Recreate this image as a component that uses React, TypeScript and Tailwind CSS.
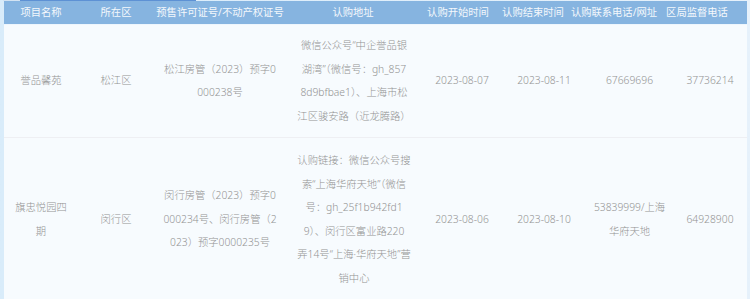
import React from "react";

type Row = {
  name: string[];
  district: string[];
  license: string[];
  address: string[];
  start: string;
  end: string;
  contact: string[];
  phone: string;
};

const rows: Row[] = [
  {
    name: ["誉品馨苑"],
    district: ["松江区"],
    license: ["松江房管（2023）预字0", "000238号"],
    address: [
      "微信公众号“中企誉品银",
      "湖湾”（微信号：gh_857",
      "8d9bfbae1）、上海市松",
      "江区骏安路（近龙腾路）",
    ],
    start: "2023-08-07",
    end: "2023-08-11",
    contact: ["67669696"],
    phone: "37736214",
  },
  {
    name: ["旗忠悦园四", "期"],
    district: ["闵行区"],
    license: ["闵行房管（2023）预字0", "000234号、闵行房管（2", "023）预字0000235号"],
    address: [
      "认购链接：微信公众号搜",
      "索“上海华府天地”（微信",
      "号：gh_25f1b942fd1",
      "9）、闵行区富业路220",
      "弄14号“上海·华府天地”营",
      "销中心",
    ],
    start: "2023-08-06",
    end: "2023-08-10",
    contact: ["53839999/上海", "华府天地"],
    phone: "64928900",
  },
];

const headers = [
  { label: "项目名称", w: "w-[74px]" },
  { label: "所在区", w: "w-[76px]" },
  { label: "预售许可证号/不动产权证号", w: "w-[132px]" },
  { label: "认购地址", w: "w-[134px]" },
  { label: "认购开始时间", w: "w-[76px]" },
  { label: "认购结束时间", w: "w-[74px]" },
  { label: "认购联系电话/网址", w: "w-[88px]" },
  { label: "区局监督电话", w: "w-[78px]" },
];

function Cell({ lines, w }: { lines: string[]; w: string }) {
  return (
    <div className={`${w} flex shrink-0 flex-col items-center justify-center text-center`}>
      {lines.map((l) => (
        <div key={l} className="whitespace-nowrap">
          {l}
        </div>
      ))}
    </div>
  );
}

export default function App() {
  return (
    <div
      className="h-[299px] w-[750px] overflow-hidden bg-gradient-to-r from-[#d9ecfa] to-[#e6f1fb] px-[3px] text-[10.3px]"
      style={{ fontFamily: '"Noto Sans", "Noto Sans CJK SC", sans-serif' }}
    >
      <div className="flex h-px">
        <div className="w-[17px] bg-[#d3e3f2]" />
        <div className="w-[176px] bg-[#5d91d4]" />
      </div>
      <div className="ml-px w-[743px]">
        <div className="flex h-[23px] items-center bg-[#86b4e0] leading-none text-[#f4f8fc]">
          {headers.map((h) => (
            <div key={h.label} className={`${h.w} shrink-0 whitespace-nowrap text-center`}>
              {h.label}
            </div>
          ))}
        </div>
        <div className="h-px bg-[#eef6fd]" />
        {rows.map((r, i) => (
          <div
            key={r.start}
            className={`flex bg-[#f7fbfe] py-[9px] font-light leading-[23.5px] text-[#939393] ${
              i === 0 ? "border-b border-[#eeeff3]" : "pt-[11px]"
            }`}
          >
            <Cell lines={r.name} w="w-[74px]" />
            <Cell lines={r.district} w="w-[76px]" />
            <Cell lines={r.license} w="w-[132px]" />
            <Cell lines={r.address} w="w-[136px]" />
            <Cell lines={[r.start]} w="w-[80px]" />
            <Cell lines={[r.end]} w="w-[84px]" />
            <Cell lines={r.contact} w="w-[87px]" />
            <Cell lines={[r.phone]} w="w-[74px]" />
          </div>
        ))}
      </div>
    </div>
  );
}
